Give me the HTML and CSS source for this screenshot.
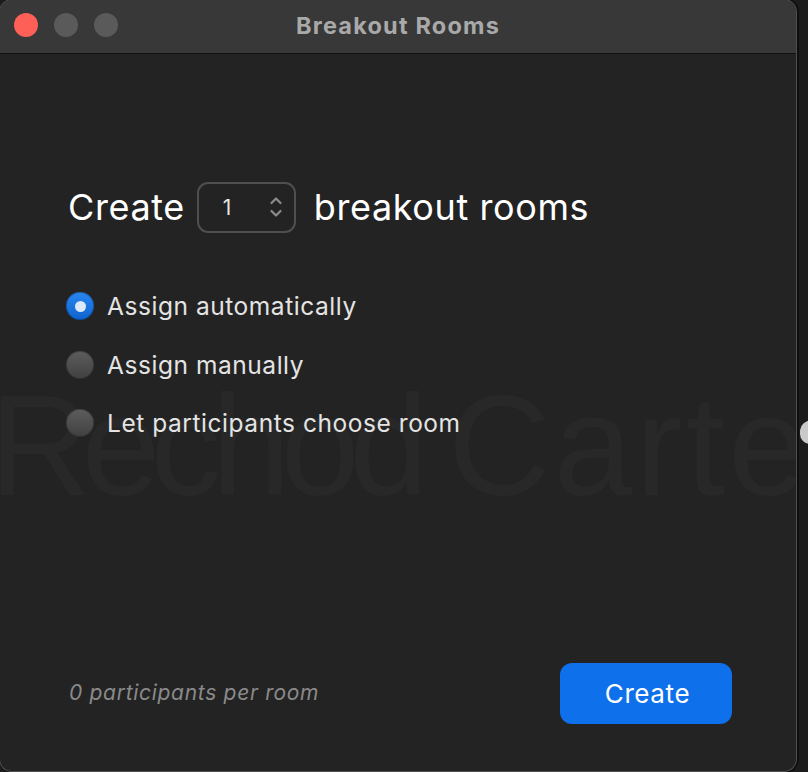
FILE: index.html
```html
<!DOCTYPE html>
<html lang="en">
<head>
<meta charset="utf-8">
<title>Breakout Rooms</title>
<link rel="stylesheet" href="styles.css">
</head>
<body>
<div class="desk">
  <div class="window">
    <div class="titlebar">
      <div class="lights">
        <span class="light red"></span>
        <span class="light gray"></span>
        <span class="light gray"></span>
      </div>
      <div class="title">Breakout Rooms</div>
    </div>
    <div class="content">
      <div class="watermark" aria-hidden="true"><span class="wm-first">Rechod </span><span class="wm-last">Carter</span></div>
      <div class="header">
        <span class="big">Create</span>
        <div class="spin">
          <span class="spin-val">1</span>
          <svg class="chev" width="14" height="28" viewBox="0 0 14 28">
            <path d="M2.5 10 L7 5.5 L11.5 10" fill="none" stroke="#8c8c8c" stroke-width="2.2" stroke-linecap="round" stroke-linejoin="round"/>
            <path d="M2.5 18 L7 22.5 L11.5 18" fill="none" stroke="#8c8c8c" stroke-width="2.2" stroke-linecap="round" stroke-linejoin="round"/>
          </svg>
        </div>
        <span class="big">breakout rooms</span>
      </div>
      <div class="options">
        <div class="opt"><span class="radio on"><span class="dot"></span></span><span class="lbl">Assign automatically</span></div>
        <div class="opt"><span class="radio"></span><span class="lbl">Assign manually</span></div>
        <div class="opt"><span class="radio"></span><span class="lbl">Let participants choose room</span></div>
      </div>
      <div class="footer">
        <span class="note">0 participants per room</span>
        <button class="btn">Create</button>
      </div>
    </div>
  </div>
  <div class="blob"></div>
</div>
</body>
</html>
```
FILE: styles.css
```css
html, body {
  margin: 0;
  padding: 0;
  background: #1c1c1c;
  width: 808px;
  height: 772px;
  overflow: hidden;
}
.desk {
  position: relative;
  display: flex;
  width: 808px;
  height: 772px;
}
.window {
  width: 796px;
  height: 771px;
  border-radius: 12px;
  background: #232323;
  box-shadow: 0 0 0 1px #505050, 1px 0 0 2px #0e0e0e;
  overflow: hidden;
  display: flex;
  flex-direction: column;
  font-family: Inter, "Noto Sans", "Liberation Sans", sans-serif;
}
.titlebar {
  position: relative;
  height: 53px;
  flex: none;
  background: #383838;
  border-bottom: 1px solid #121212;
  display: flex;
  align-items: center;
  justify-content: center;
}
.lights {
  position: absolute;
  left: 14px;
  top: 13px;
  display: flex;
  gap: 16px;
}
.light {
  width: 24px;
  height: 24px;
  border-radius: 50%;
  background: #5a5a5a;
}
.light.red {
  background: #fe5f57;
}
.title {
  color: #a9a9a9;
  font-weight: 700;
  font-size: 23.5px;
  letter-spacing: 1.2px;
  margin-top: -3px;
  margin-left: 0;
}
.content {
  position: relative;
  flex: 1;
  display: flex;
  flex-direction: column;
  padding: 129px 64px 47px 66px;
}
.watermark {
  position: absolute;
  left: -11px;
  top: 322px;
  font-family: "Liberation Sans", Arial, sans-serif;
  font-size: 142px;
  line-height: 140px;
  color: #282828;
  white-space: nowrap;
  z-index: 0;
  pointer-events: none;
}
.wm-first {
  letter-spacing: -10px;
}
.wm-last {
  letter-spacing: 3px;
}
.header, .options, .footer {
  position: relative;
  z-index: 1;
}
.header {
  display: flex;
  align-items: center;
  gap: 12px;
  height: 50px;
  margin-top: -1px;
}
.big {
  color: #ffffff;
  font-size: 36px;
  letter-spacing: 0.6px;
}
.header .big:first-child {
  margin-left: 2px;
}
.header .big:last-child {
  margin-left: 6px;
}
.spin {
  box-sizing: border-box;
  width: 99px;
  height: 51px;
  border: 2px solid #4f4f4f;
  border-radius: 11px;
  display: flex;
  align-items: center;
  justify-content: space-between;
  padding: 0 11px 0 24px;
}
.spin-val {
  color: #e6e6e6;
  font-size: 21px;
}
.chev {
  display: block;
}
.options {
  display: flex;
  flex-direction: column;
  gap: 30.5px;
  margin-top: 60px;
}
.opt {
  display: flex;
  align-items: center;
  gap: 13px;
  height: 28px;
}
.radio {
  width: 28px;
  height: 28px;
  border-radius: 50%;
  background: linear-gradient(#5d5d5d, #404040);
  box-shadow: inset 0 0 0 1px rgba(0,0,0,0.25);
  display: flex;
  align-items: center;
  justify-content: center;
  flex: none;
}
.radio.on {
  background: linear-gradient(#2a86f0, #0f63cf);
}
.dot {
  width: 11px;
  height: 11px;
  border-radius: 50%;
  background: #dde9f8;
}
.lbl {
  color: #e4e4e4;
  font-size: 24.5px;
  letter-spacing: 0.55px;
}
.footer {
  margin-top: auto;
  display: flex;
  align-items: center;
  justify-content: space-between;
  padding-left: 3px;
}
.note {
  color: #8a8a8a;
  font-style: italic;
  font-size: 21px;
  letter-spacing: 0.7px;
  margin-top: -2px;
}
.btn {
  width: 172px;
  height: 61px;
  border: none;
  border-radius: 12px;
  background: #0e71eb;
  color: #ffffff;
  font-family: Inter, "Noto Sans", "Liberation Sans", sans-serif;
  font-size: 26px;
  letter-spacing: 0.6px;
  padding: 0 0 0 3px;
}
.blob {
  position: absolute;
  left: 800px;
  top: 420px;
  width: 20px;
  height: 24px;
  border-radius: 12px 0 0 10px;
  background: #c9c9c9;
}
```
